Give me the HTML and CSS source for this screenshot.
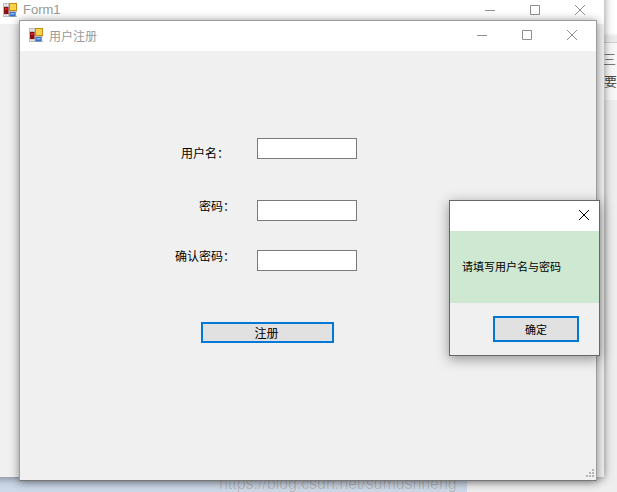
FILE: index.html
```html
<!DOCTYPE html>
<html>
    <head>
        <title>用户注册</title>
        <link rel="stylesheet" href="styles.css">
    </head>
    <body>
        <div class="side_panel">
            <span class="side_icon">三</span>
            <span class="side_text">要</span>
        </div>

        <div class="strip">https://blog.csdn.net/sumushheng</div>

        <!-- Form1, mostly hidden behind the register window -->
        <div class="window window_back">
            <div class="title_bar">
                <svg class="app_icon" viewBox="0 0 14 14">
                    <use href="#form_icon"></use>
                </svg>
                <span class="title_text title_latin">Form1</span>
                <div class="controls">
                    <svg viewBox="0 0 10 10"><path d="M0 5.5H10"></path></svg>
                    <svg viewBox="0 0 10 10"><path d="M.5 .5H9.5V9.5H.5Z"></path></svg>
                    <svg viewBox="0 0 10 10"><path d="M0 0L10 10M10 0L0 10"></path></svg>
                </div>
            </div>
        </div>

        <div class="window window_front">
            <div class="title_bar">
                <svg class="app_icon" viewBox="0 0 14 14">
                    <g id="form_icon">
                        <path fill="#bdbdbd" d="M0 0H14V14H0Z"></path>
                        <path fill="#f4f4f4" d="M1 1H2.5V3H1ZM3.500 1H5V3H3.500ZM1 11.500H2.500V13H1ZM3.500 11.500H5V13H3.500ZM13 9H14V13H13Z"></path>
                        <path fill="#8c1010" d="M1 4H5.500V11H1Z"></path>
                        <path fill="#e02020" d="M2 5H4.500V7H2Z"></path>
                        <path fill="#c98a12" d="M6 0H14V8H6Z"></path>
                        <path fill="#fad24a" d="M7 1H13V7H7Z"></path>
                        <path fill="#3f6fc4" d="M6.500 9H12.500V13.500H6.500Z"></path>
                        <path fill="#8fb6ee" d="M7.500 10H11.500V11.500H7.500Z"></path>
                    </g>
                </svg>
                <span class="title_text">用户注册</span>
                <div class="controls">
                    <svg viewBox="0 0 10 10"><path d="M0 5.5H10"></path></svg>
                    <svg viewBox="0 0 10 10"><path d="M.5 .5H9.5V9.5H.5Z"></path></svg>
                    <svg viewBox="0 0 10 10"><path d="M0 0L10 10M10 0L0 10"></path></svg>
                </div>
            </div>

            <form class="register_form">
                <div class="field field_name">
                    <label>用户名：</label>
                    <input type="text">
                </div>
                <div class="field field_pass">
                    <label>密码：</label>
                    <input type="text">
                </div>
                <div class="field field_confirm">
                    <label>确认密码：</label>
                    <input type="text">
                </div>
                <button type="button" class="win_button register_button">注册</button>
            </form>

            <svg class="grip" viewBox="0 0 9 9">
                <path d="M7 0H9V2H7ZM4 3H6V5H4ZM7 3H9V5H7ZM1 6H3V8H1ZM4 6H6V8H4ZM7 6H9V8H7Z"></path>
            </svg>
        </div>

        <div class="dialog">
            <div class="dialog_head">
                <svg viewBox="0 0 10 10"><path d="M0 0L10 10M10 0L0 10"></path></svg>
            </div>
            <div class="dialog_message">请填写用户名与密码</div>
            <div class="dialog_foot">
                <button type="button" class="win_button ok_button">确定</button>
            </div>
        </div>
    </body>
</html>
```

FILE: styles.css
```css
html, body {
    margin: 0;
    height: 100%;
}
body {
    width: 617px;
    height: 492px;
    position: relative;
    overflow: hidden;
    background-color: #eeeeee;
    font-family: "Noto Sans CJK SC", sans-serif;
    font-size: 12px;
    color: #000;
}

/* things behind the windows */
.side_panel {
    position: absolute;
    top: 0;
    left: 604px;
    width: 13px;
    height: 100px;
    box-sizing: border-box;
    display: flex;
    flex-direction: column;
    gap: 5px;
    padding-top: 50px;
    background: linear-gradient(#fff 33px, #ececec 36px, #ececec 42px, #cfcfcf 42px, #cfcfcf 43px, #f8f8f8 43px);
    font-size: 13px;
    line-height: 17px;
    color: #444;
}
.side_icon {
    margin-left: -1px;
    color: #777;
}
.strip {
    position: absolute;
    top: 472px;
    left: 0;
    width: 467px;
    height: 20px;
    background-color: #cdd9e9;
    box-sizing: border-box;
    padding: 2px 0 0 219px;
    font-family: "Liberation Sans", sans-serif;
    font-size: 15.9px;
    line-height: 20px;
    color: #b4b8c0;
    text-shadow: 0 0 1px #fff;
    white-space: nowrap;
}

/* windows */
.window {
    position: absolute;
    box-sizing: border-box;
    background-color: #f0f0f0;
    box-shadow: 0 1px 9px rgba(0, 0, 0, 0.45);
}
.window_back {
    top: -8px;
    left: -40px;
    width: 644px;
    height: 485px;
}
.window_back .title_bar {
    height: 32px;
    padding: 11px 19px 0 43px;
}
.window_front {
    top: 20px;
    left: 19px;
    width: 578px;
    height: 461px;
    border: 1px solid #9c9c9c;
    border-bottom-color: #777;
}
.title_bar {
    box-sizing: border-box;
    height: 30px;
    padding: 7px 19px 0 9px;
    display: flex;
    align-items: flex-start;
    background-color: #fff;
}
.app_icon {
    width: 14px;
    height: 14px;
    flex-shrink: 0;
}
.title_text {
    margin-left: 6px;
    line-height: 16px;
    color: #999;
}
.title_latin {
    margin-top: -1px;
    font-family: "Liberation Sans", sans-serif;
    font-size: 13px;
}
.controls {
    margin-left: auto;
    display: flex;
    gap: 35px;
    padding-top: 2px;
}
.controls svg {
    width: 10px;
    height: 10px;
    fill: none;
    stroke: #8f8f8f;
}

/* form */
.register_form {
    padding: 87px 0 0 0;
}
.field {
    display: flex;
    align-items: flex-start;
    height: 21px;
}
.field label {
    box-sizing: border-box;
    width: 237px;
    padding-right: 22px;
    text-align: right;
    line-height: 18px;
    white-space: nowrap;
}
.field input {
    box-sizing: border-box;
    width: 100px;
    height: 21px;
    margin: 0;
    padding: 0;
    border: 1px solid #7a7a7a;
    background-color: #fff;
}
.field_name {
    margin-bottom: 41px;
}
.field_name label {
    padding: 6px 28px 0 0;
}
.field_pass {
    margin-bottom: 29px;
}
.field_pass label {
    margin-top: -3px;
}
.field_confirm {
    margin-bottom: 51px;
}
.field_confirm label {
    margin-top: -3px;
}
.win_button {
    box-sizing: border-box;
    margin: 0;
    padding: 0;
    border: 2px solid #0078d7;
    background-color: #e1e1e1;
    font-family: "Noto Sans CJK SC", sans-serif;
    font-size: 12px;
    line-height: 17px;
    color: #000;
}
.register_button {
    display: block;
    width: 133px;
    height: 21px;
    margin-left: 181px;
    padding-right: 2px;
}
.grip {
    position: absolute;
    right: 2px;
    bottom: 2px;
    width: 9px;
    height: 9px;
    fill: #b5b5b5;
}

/* message box */
.dialog {
    position: absolute;
    top: 200px;
    left: 449px;
    width: 151px;
    height: 156px;
    box-sizing: border-box;
    display: flex;
    flex-direction: column;
    border: 1px solid #666;
    background-color: #f0f0f0;
    box-shadow: 0 3px 12px rgba(0, 0, 0, 0.4);
}
.dialog_head {
    box-sizing: border-box;
    height: 30px;
    padding: 9px 10px 0 0;
    display: flex;
    justify-content: flex-end;
    background-color: #fff;
}
.dialog_head svg {
    width: 10px;
    height: 10px;
    fill: none;
    stroke: #000;
}
.dialog_message {
    box-sizing: border-box;
    height: 72px;
    padding: 27px 0 0 12px;
    background-color: #cfe8d1;
    line-height: 16px;
    font-size: 11px;
}
.dialog_foot {
    padding: 13px 20px 0 0;
    display: flex;
    justify-content: flex-end;
}
.ok_button {
    width: 86px;
    height: 26px;
    font-size: 11px;
}
```
